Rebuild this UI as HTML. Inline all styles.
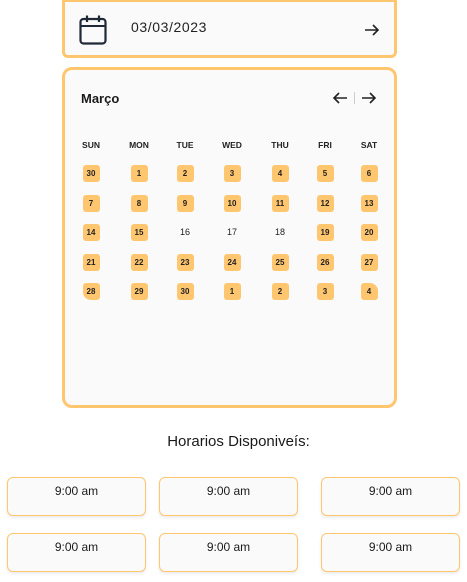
<!DOCTYPE html>
<html><head><style>
body{margin:0;width:467px;height:582px;background:#fff;font-family:"Liberation Sans",sans-serif;position:relative;overflow:hidden;color:#1a1a1a}
.box{position:absolute;box-sizing:border-box;border:3px solid #FFC670;background:#FAFAFA}
.chip{position:absolute;width:17px;height:17px;background:#FFC670;border-radius:3px;font-size:8px;font-weight:bold;display:flex;align-items:center;justify-content:center;color:#222}
.plain{position:absolute;width:17px;height:17px;font-size:9px;display:flex;align-items:center;justify-content:center;color:#222}
.hd{position:absolute;font-size:8.5px;font-weight:bold;color:#222;transform:translateX(-50%)}
.slot{position:absolute;box-sizing:border-box;width:139px;height:39px;border:1px solid #FFC670;border-radius:6px;background:#FAFAFA;box-shadow:0 2px 3px rgba(0,0,0,.08);text-align:center;font-size:12px;padding-top:6px}
</style></head><body>
<div class="box" style="left:62px;top:-1px;width:335px;height:59px;border-radius:0 0 6px 6px"></div>
<svg style="position:absolute;left:78px;top:14px" width="30" height="32" viewBox="0 0 30 32"><rect x="2.5" y="5" width="25" height="24.5" rx="3" fill="none" stroke="#1f2937" stroke-width="2.2"/><line x1="2.5" y1="12" x2="27.5" y2="12" stroke="#1f2937" stroke-width="2"/><line x1="9" y1="1.5" x2="9" y2="8" stroke="#1f2937" stroke-width="2.2"/><line x1="21" y1="1.5" x2="21" y2="8" stroke="#1f2937" stroke-width="2.2"/></svg>
<div style="position:absolute;left:131px;top:19px;font-size:14px;letter-spacing:0.6px;color:#222">03/03/2023</div>
<svg style="position:absolute;left:364px;top:23px" width="16" height="14" viewBox="0 0 16 14"><path d="M1 7H14M9 2l5 5-5 5" fill="none" stroke="#222" stroke-width="1.6"/></svg>

<div class="box" style="left:62px;top:67px;width:335px;height:341px;border-radius:10px"></div>
<div style="position:absolute;left:81px;top:91px;font-size:13px;font-weight:bold">Março</div>
<svg style="position:absolute;left:332px;top:91px" width="16" height="14" viewBox="0 0 16 14"><path d="M15 7H2M7 2L2 7l5 5" fill="none" stroke="#222" stroke-width="1.6"/></svg>
<div style="position:absolute;left:354px;top:92px;width:1px;height:12px;background:#ccc"></div>
<svg style="position:absolute;left:361px;top:91px" width="16" height="14" viewBox="0 0 16 14"><path d="M1 7H14M9 2l5 5-5 5" fill="none" stroke="#222" stroke-width="1.6"/></svg>

<div class="hd" style="left:91px;top:140px">SUN</div>
<div class="hd" style="left:139px;top:140px">MON</div>
<div class="hd" style="left:185px;top:140px">TUE</div>
<div class="hd" style="left:232px;top:140px">WED</div>
<div class="hd" style="left:280px;top:140px">THU</div>
<div class="hd" style="left:325px;top:140px">FRI</div>
<div class="hd" style="left:369px;top:140px">SAT</div>

<div id="g"></div>
<script>
var xs=[91,139,185,232,280,325,369],ys=[173,203,232,262,291];
var d=[[30,1,2,3,4,5,6],[7,8,9,10,11,12,13],[14,15,16,17,18,19,20],[21,22,23,24,25,26,27],[28,29,30,1,2,3,4]];
var h='';
for(var r=0;r<5;r++)for(var c=0;c<7;c++){var v=d[r][c];var p=(r==2&&c>=2&&c<=4);
var st='left:'+(xs[c]-8.5)+'px;top:'+(ys[r]-8.5)+'px;';
if(r==4&&c==0)st+='border-radius:3px 3px 3px 8px;';
if(r==4&&c==6)st+='border-radius:3px 8px 3px 3px;';
h+='<div class="'+(p?'plain':'chip')+'" style="'+st+'">'+v+'</div>';}
document.getElementById('g').innerHTML=h;
</script>

<div style="position:absolute;left:0;width:467px;top:433px;text-align:center;font-size:15px;padding-left:10px;box-sizing:border-box">Horarios Disponiveís:</div>
<div class="slot" style="left:7px;top:477px">9:00 am</div>
<div class="slot" style="left:159px;top:477px">9:00 am</div>
<div class="slot" style="left:321px;top:477px">9:00 am</div>
<div class="slot" style="left:7px;top:533px">9:00 am</div>
<div class="slot" style="left:159px;top:533px">9:00 am</div>
<div class="slot" style="left:321px;top:533px">9:00 am</div>
</body></html>
